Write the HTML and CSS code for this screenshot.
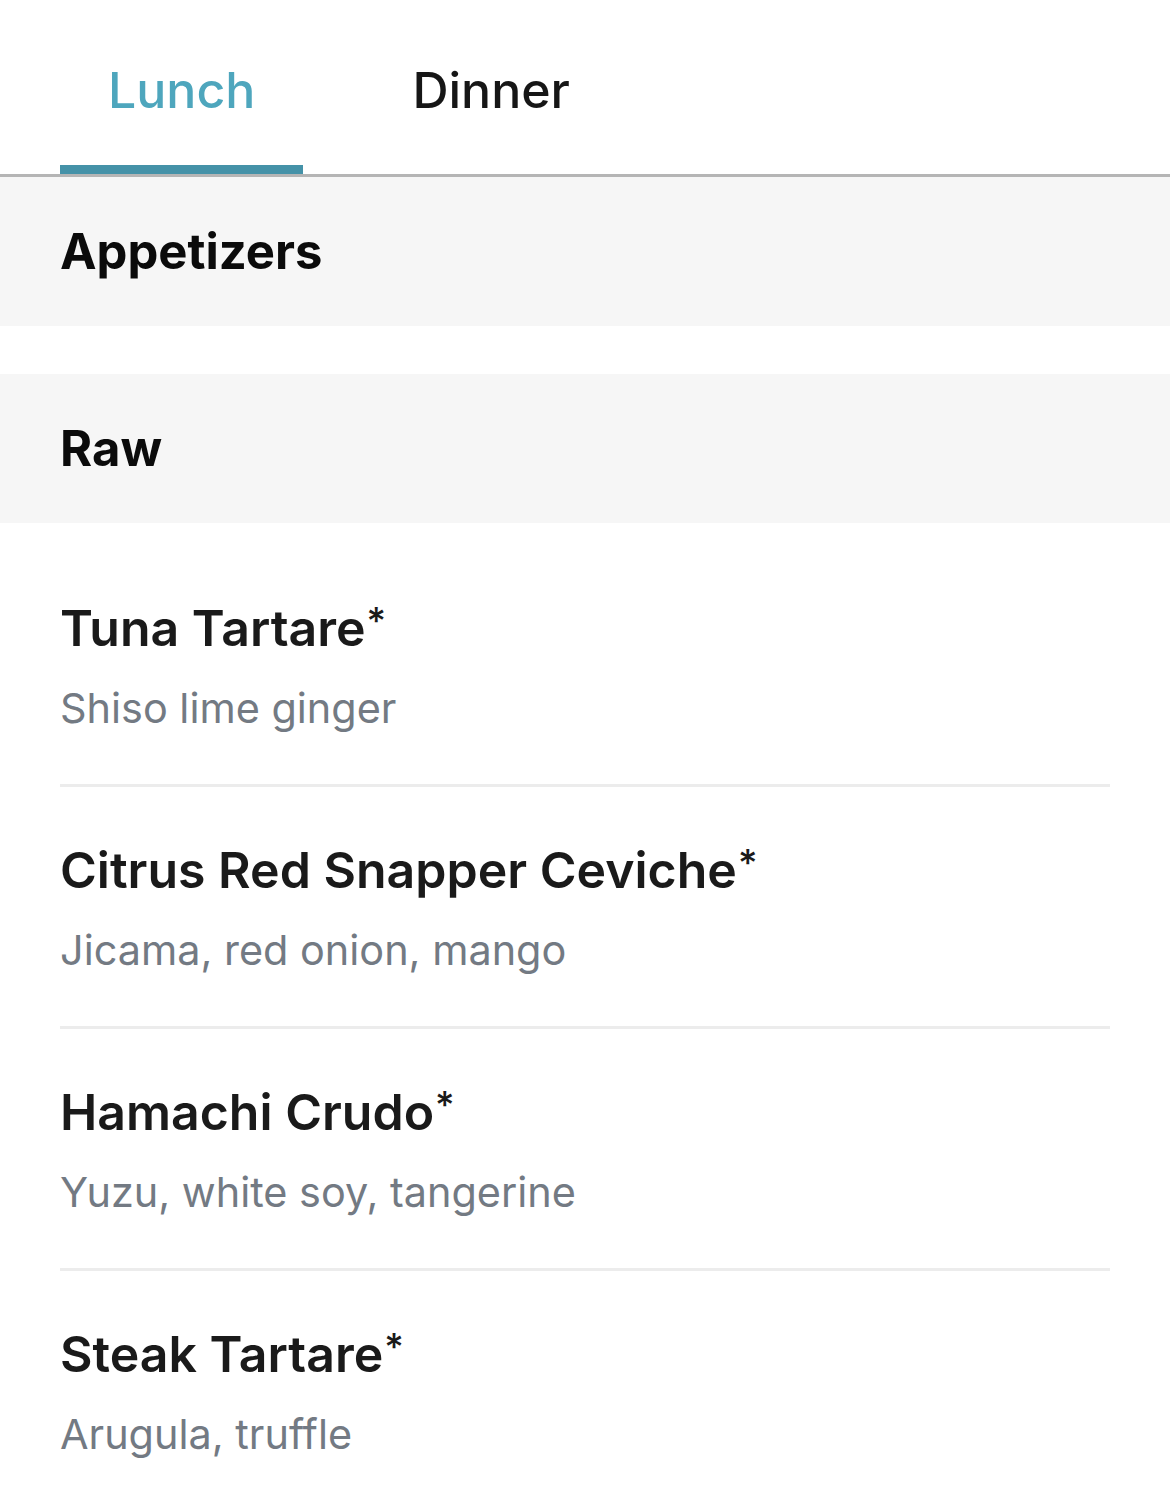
FILE: index.html
```html
<!DOCTYPE html>
<html>
<head>
    <title>Menu</title>
    <link rel="stylesheet" href="styles.css">
</head>
<body>
    <nav class="tabs">
        <a class="tab tab-active">Lunch</a>
        <a class="tab">Dinner</a>
    </nav>

    <h2 class="section-title">Appetizers</h2>
    <h3 class="section-title section-sub">Raw</h3>

    <ul class="items">
        <li class="item">
            <div class="item-name">Tuna Tartare<span class="mark">*</span></div>
            <div class="item-desc">Shiso lime ginger</div>
        </li>
        <li class="item">
            <div class="item-name">Citrus Red Snapper Ceviche<span class="mark">*</span></div>
            <div class="item-desc">Jicama, red onion, mango</div>
        </li>
        <li class="item">
            <div class="item-name">Hamachi Crudo<span class="mark">*</span></div>
            <div class="item-desc">Yuzu, white soy, tangerine</div>
        </li>
        <li class="item">
            <div class="item-name">Steak Tartare<span class="mark">*</span></div>
            <div class="item-desc">Arugula, truffle</div>
        </li>
    </ul>
</body>
</html>
```

FILE: styles.css
```css
body {
    margin: 0;
    font-family: Inter, "Noto Sans", sans-serif;
    background-color: #fff;
    color: #161616;
}
.tabs {
    display: flex;
    gap: 61px;
    padding: 0 60px;
    border-bottom: 3px solid #b5b5b5;
}
.tab {
    display: block;
    padding: 58px 48px 0;
    height: 116px;
    font-size: 50px;
    font-weight: 500;
    line-height: 64px;
    color: #161616;
}
.tab-active {
    color: #4ea6bd;
    height: 107px;
    border-bottom: 9px solid #4592a8;
}
.section-title {
    margin: 0;
    height: 149px;
    display: flex;
    align-items: center;
    padding-left: 60px;
    background-color: #f6f6f6;
    font-size: 49px;
    font-weight: 700;
    color: #0b0b0b;
}
.section-sub {
    margin-top: 48px;
}
.items {
    list-style: none;
    margin: 0;
    padding: 22px 60px 0;
}
.item {
    padding: 51px 0 50px;
    border-bottom: 3px solid #ececec;
}
.item:last-child {
    border-bottom: none;
}
.item-name {
    font-size: 50px;
    line-height: 64px;
    font-weight: 600;
    color: #1a1a1a;
}
.mark {
    font-size: 0.75em;
    font-weight: 500;
    line-height: 1;
    vertical-align: 0.3em;
    margin-left: 1px;
}
.item-desc {
    margin-top: 22px;
    font-size: 41.4px;
    line-height: 52px;
    color: #737a83;
}
```
